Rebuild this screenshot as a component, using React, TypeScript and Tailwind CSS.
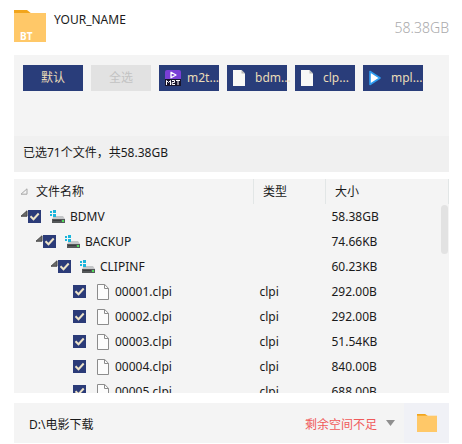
import { useState } from "react";

interface FileRow {
  name: string;
  type: string;
  size: string;
  depth: number;
  folder?: boolean;
}

const rows: FileRow[] = [
  { name: "BDMV", type: "", size: "58.38GB", depth: 0, folder: true },
  { name: "BACKUP", type: "", size: "74.66KB", depth: 1, folder: true },
  { name: "CLIPINF", type: "", size: "60.23KB", depth: 2, folder: true },
  { name: "00001.clpi", type: "clpi", size: "292.00B", depth: 3 },
  { name: "00002.clpi", type: "clpi", size: "292.00B", depth: 3 },
  { name: "00003.clpi", type: "clpi", size: "51.54KB", depth: 3 },
  { name: "00004.clpi", type: "clpi", size: "840.00B", depth: 3 },
  { name: "00005.clpi", type: "clpi", size: "688.00B", depth: 3 },
];

const indents = ["pl-[6px]", "pl-[21px]", "pl-[36px]", "pl-[51px]"];

function FolderIcon({ className = "" }: { className?: string }) {
  return (
    <svg viewBox="0 0 32 32" preserveAspectRatio="none" className={className} aria-hidden="true">
      <path d="M0 0h13l5 4v4H0z" fill="#f2a51c" />
      <path d="M0 3h32v29H0z" fill="#ffc868" />
    </svg>
  );
}

function PageIcon({ className = "" }: { className?: string }) {
  return (
    <svg viewBox="0 0 12 16" className={className} aria-hidden="true">
      <path d="M.5.5h7.2l3.8 3.8v11.2H.5z" fill="#fcfcfc" stroke="#8c8c8c" />
      <path d="M7.5.5v4h4" fill="none" stroke="#8c8c8c" />
    </svg>
  );
}

function SolidPageIcon() {
  return (
    <svg viewBox="0 0 12 16" className="h-4 w-3" aria-hidden="true">
      <path d="M0 0h8.5L12 3.5V16H0z" fill="#f8f8f6" />
      <path d="M8.5 0v3.5H12z" fill="#b9b9b9" />
    </svg>
  );
}

function M2tIcon() {
  return (
    <svg viewBox="0 0 16 16" className="h-4 w-4" aria-hidden="true">
      <rect width="16" height="12" rx="2" fill="#7b3fd6" />
      <path d="M6 2.2v5.6L11 5z" fill="none" stroke="#fff" strokeWidth="1.3" strokeLinejoin="round" />
      <rect y="9" width="16" height="7" fill="#16132a" />
      <path
        d="M1.5 15v-4.5l2 2 2-2V15M7 10.5h2.5v2H7.2v2H10M11 10.5h4M13 10.5V15"
        fill="none"
        stroke="#fff"
      />
    </svg>
  );
}

function PlayIcon() {
  return (
    <svg viewBox="0 0 12 16" className="h-4 w-3" aria-hidden="true">
      <path d="M1 1.5v13L11 8z" fill="#fff" stroke="#2d9cf0" strokeWidth="1.6" strokeLinejoin="round" />
    </svg>
  );
}

function DriveIcon() {
  return (
    <svg viewBox="0 0 15 13" className="h-[13px] w-[15px] shrink-0" aria-hidden="true">
      <path d="M4 6h9l2 3H2z" fill="#c4c6c8" />
      <path d="M2 9h13v4H2z" fill="#55585a" />
      <path d="M3 10h8v1H3z" fill="#3a3c3e" />
      <path d="M12 10h2v2h-2z" fill="#4fdc5a" />
      <path d="M0 1h2v2H0zM3 0h3v3H3zM0 4h2v2H0zM3 4h3v3H3z" fill="#19b5dc" />
    </svg>
  );
}

function Triangle({ open }: { open?: boolean }) {
  return (
    <svg viewBox="0 0 8 7" className="h-[7px] w-2" aria-hidden="true">
      <path
        d="M7 .8v5.4H1z"
        fill={open ? "#6b6b6b" : "none"}
        stroke={open ? "#484848" : "#a6a6a6"}
        strokeWidth="1"
      />
    </svg>
  );
}

function Check({ name }: { name: string }) {
  return (
    <span className="relative h-[13px] w-[13px] shrink-0">
      <input
        id={name}
        type="checkbox"
        defaultChecked
        className="peer block h-[13px] w-[13px] appearance-none border border-[#2b3b78] bg-white checked:bg-[#2b3b78]"
      />
      <svg
        viewBox="0 0 13 13"
        className="pointer-events-none absolute inset-0 hidden peer-checked:block"
        aria-hidden="true"
      >
        <path d="M2.5 6.2l3 3 5.2-5.7" fill="none" stroke="#eee4c8" strokeWidth="2" />
      </svg>
    </span>
  );
}

const filters = [
  { label: "m2t...", icon: <M2tIcon /> },
  { label: "bdm...", icon: <SolidPageIcon /> },
  { label: "clp...", icon: <SolidPageIcon /> },
  { label: "mpl...", icon: <PlayIcon /> },
];

export default function App() {
  const [path, setPath] = useState("D:\\电影下载");

  return (
    <main className="bg-white pl-3.5 pr-[13px] pt-2.5 font-['Noto_Sans','Noto_Sans_CJK_SC',sans-serif] text-xs text-[#1a1a1a]">
      <header className="flex h-[45px] gap-2">
        <div className="relative h-8 w-8 shrink-0">
          <FolderIcon className="h-8 w-8" />
          <span className="absolute bottom-0 left-1.5 text-[10px] font-bold leading-3 text-white">BT</span>
        </div>
        <h1 className="flex-1 leading-5">YOUR_NAME</h1>
        <span className="pt-2 text-sm font-light text-[#a9a9ab]">58.38GB</span>
      </header>

      <section className="bg-[#f4f4f4]">
        <div className="flex h-[81px] gap-2 px-[9px] pt-2.5 text-[#e9dcb8]">
          <button type="button" className="h-[26px] w-[60px] bg-[#293d7a]">默认</button>
          <button type="button" disabled className="h-[26px] w-[60px] bg-[#e2e2e2] text-[#c3c3c3]">全选</button>
          {filters.map((f) => (
            <button
              key={f.label}
              type="button"
              className="flex h-[26px] w-[60px] items-center bg-[#293d7a] pl-1.5"
            >
              <span className="flex w-[22px] shrink-0 justify-start">{f.icon}</span>
              <span>{f.label}</span>
            </button>
          ))}
        </div>
        <p className="h-9 bg-[#f0f0f0] px-[9px] leading-[34px]">已选71个文件，共58.38GB</p>
      </section>

      <section className="relative mt-[7px] h-[214px] overflow-hidden bg-[#f4f4f4]">
        <table className="w-full table-fixed border-collapse text-left">
          <colgroup>
            <col />
            <col className="w-[72px]" />
            <col className="w-[123px]" />
          </colgroup>
          <thead>
            <tr className="h-[25px]">
              <th className="p-0 font-normal">
                <span className="flex items-center gap-2 pl-1.5">
                  <Triangle />
                  文件名称
                </span>
              </th>
              <th className="border-l border-[#e2e6e6] p-0 pl-[9px] font-normal">类型</th>
              <th className="border-x border-[#e2e6e6] p-0 pl-[9px] font-normal">大小</th>
            </tr>
          </thead>
          <tbody>
            {rows.map((row) => (
              <tr key={row.name} className="h-[25px]">
                <td className="p-0">
                  <div className={`flex items-center ${indents[row.depth]}`}>
                    {row.folder ? (
                      <button type="button" aria-label={`折叠 ${row.name}`} className="h-[13px] w-2 shrink-0">
                        <span className="flex h-full items-start">
                          <Triangle open />
                        </span>
                      </button>
                    ) : (
                      <span className="w-2 shrink-0" />
                    )}
                    <Check name={row.name} />
                    <label htmlFor={row.name} className="flex items-center">
                      {row.folder ? (
                        <span className="flex w-[29px] pl-[9px]">
                          <DriveIcon />
                        </span>
                      ) : (
                        <span className="flex w-[29px] pl-[11px]">
                          <PageIcon className="h-4 w-3" />
                        </span>
                      )}
                      {row.name}
                    </label>
                  </div>
                </td>
                <td className="p-0 pl-1.5">{row.type}</td>
                <td className="p-0 pl-1.5">{row.size}</td>
              </tr>
            ))}
          </tbody>
        </table>
        <div className="absolute right-px top-[26px] h-[49px] w-[7px] rounded-sm bg-[#e2e2e2]" />
      </section>

      <footer className="mt-2.5 flex h-10 items-center bg-[#f4f4f4]">
        <input
          type="text"
          aria-label="下载目录"
          value={path}
          onChange={(e) => setPath(e.target.value)}
          className="min-w-0 flex-1 bg-transparent pl-[15px] pt-1 outline-none"
        />
        <span className="pt-1 text-[#f05a5a]">剩余空间不足</span>
        <button type="button" aria-label="选择目录" className="flex h-10 w-[27px] items-center justify-center">
          <svg viewBox="0 0 9 6" className="h-1.5 w-[9px]" aria-hidden="true">
            <path d="M0 0h9L4.500 6z" fill="#8f8f8f" />
          </svg>
        </button>
        <button type="button" aria-label="打开文件夹" className="flex h-10 w-[45px] items-center justify-center bg-[#f0f1f6]">
          <FolderIcon className="h-[18px] w-5" />
        </button>
      </footer>
    </main>
  );
}
